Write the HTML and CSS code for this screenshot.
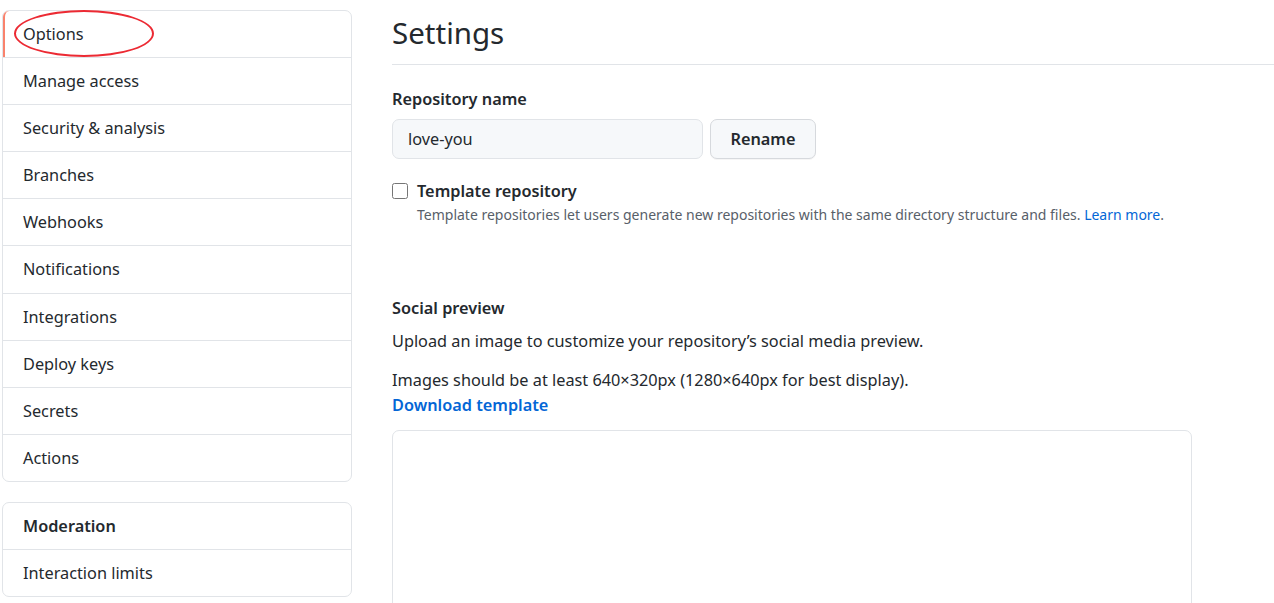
FILE: index.html
```html
<!DOCTYPE html>
<html lang="en">
<head>
<meta charset="utf-8">
<title>Settings</title>
<link rel="stylesheet" href="styles.css">
</head>
<body>
<div class="layout">
  <aside class="sidebar">
    <nav class="menu">
      <a class="menu-item active" href="#">Options<span class="annotation"></span></a>
      <a class="menu-item" href="#">Manage access</a>
      <a class="menu-item" href="#">Security &amp; analysis</a>
      <a class="menu-item" href="#">Branches</a>
      <a class="menu-item" href="#">Webhooks</a>
      <a class="menu-item" href="#">Notifications</a>
      <a class="menu-item" href="#">Integrations</a>
      <a class="menu-item" href="#">Deploy keys</a>
      <a class="menu-item" href="#">Secrets</a>
      <a class="menu-item" href="#">Actions</a>
    </nav>
    <nav class="menu">
      <div class="menu-heading">Moderation</div>
      <a class="menu-item" href="#">Interaction limits</a>
    </nav>
  </aside>
  <main class="content">
    <h1 class="page-title">Settings</h1>
    <section class="field">
      <label class="field-label" for="repo-name">Repository name</label>
      <div class="rename-row">
        <input id="repo-name" class="text-input" type="text" value="love-you">
        <button class="btn" type="button">Rename</button>
      </div>
    </section>
    <section class="check-field">
      <input id="template" class="checkbox" type="checkbox">
      <div class="check-body">
        <label class="check-label" for="template">Template repository</label>
        <p class="note">Template repositories let users generate new repositories with the same directory structure and files. <a href="#" class="link">Learn more</a>.</p>
      </div>
    </section>
    <section class="social">
      <h2 class="sub-title">Social preview</h2>
      <p class="para">Upload an image to customize your repository’s social media preview.</p>
      <p class="para tight">Images should be at least 640×320px (1280×640px for best display).</p>
      <a href="#" class="link strong">Download template</a>
      <div class="preview-box"></div>
    </section>
  </main>
</div>
</body>
</html>
```
FILE: styles.css
```css
* { box-sizing: border-box; }
html, body { margin: 0; padding: 0; background: #fff; }
body {
  font-family: "Noto Sans", "Open Sans", "Liberation Sans", sans-serif;
  color: #24292e;
  font-size: 16.3px;
  overflow: hidden;
  height: 603px;
}
.layout {
  display: flex;
  gap: 40px;
  padding: 10px 0 0 2px;
}
.sidebar {
  width: 350px;
  flex: none;
  display: flex;
  flex-direction: column;
  gap: 20px;
}
.menu {
  border: 1px solid #e1e4e8;
  border-radius: 7px;
  display: flex;
  flex-direction: column;
}
.menu-item, .menu-heading {
  position: relative;
  display: block;
  height: 47.1px;
  line-height: 46px;
  padding: 0 20px;
  color: #24292e;
  text-decoration: none;
  border-top: 1px solid #e1e4e8;
  font-size: 16.3px;
}
.menu > :first-child { border-top: none; height: 46.1px; }
.menu-heading { font-weight: 600; }
.menu-item.active {
  border-left: 2px solid #f9826c;
  padding-left: 18px;
  border-top-left-radius: 6px;
}
.annotation {
  position: absolute;
  left: 9px;
  top: -1px;
  width: 140px;
  height: 47px;
  border: 2.5px solid #ec2a33;
  border-radius: 50%;
  pointer-events: none;
}
.content {
  flex: 1;
  min-width: 0;
}
.page-title {
  margin: 0;
  font-size: 29.5px;
  font-weight: 400;
  line-height: 46px;
  padding-bottom: 8px;
  border-bottom: 1px solid #e1e4e8;
}
.field { margin-top: 22px; }
.field-label {
  display: block;
  font-weight: 600;
  line-height: 24px;
}
.rename-row {
  display: flex;
  gap: 7px;
  margin-top: 8px;
}
.text-input {
  width: 311px;
  height: 40px;
  border: 1px solid #e1e4e8;
  border-radius: 7px;
  background: #f6f8fa;
  padding: 0 15px;
  font: inherit;
  color: #24292e;
}
.btn {
  width: 106px;
  height: 40px;
  border: 1px solid #d6d9dd;
  border-radius: 7px;
  background: #f6f8fa;
  font: inherit;
  font-weight: 600;
  color: #24292e;
  box-shadow: 0 1px 0 rgba(27,31,35,0.04);
}
.check-field {
  display: flex;
  gap: 9px;
  margin-top: 21px;
}
.checkbox {
  margin: 3px 0 0 0;
  width: 16px;
  height: 16px;
  flex: none;
}
.check-label {
  display: block;
  font-weight: 600;
  line-height: 22px;
}
.note {
  margin: 3px 0 0;
  font-size: 14px;
  line-height: 20px;
  color: #586069;
}
.link { color: #0366d6; text-decoration: none; }
.link.strong { font-weight: 600; line-height: 24px; display: inline-block; margin-top: 1px; }
.social { margin-top: 71px; }
.sub-title {
  margin: 0;
  font-size: 16.3px;
  font-weight: 600;
  line-height: 24px;
}
.para {
  margin: 9px 0 0;
  line-height: 24px;
}
.para.tight { margin-top: 15px; }
.preview-box {
  margin-top: 13px;
  width: 800px;
  height: 200px;
  border: 1px solid #e1e4e8;
  border-radius: 7px;
}
```
